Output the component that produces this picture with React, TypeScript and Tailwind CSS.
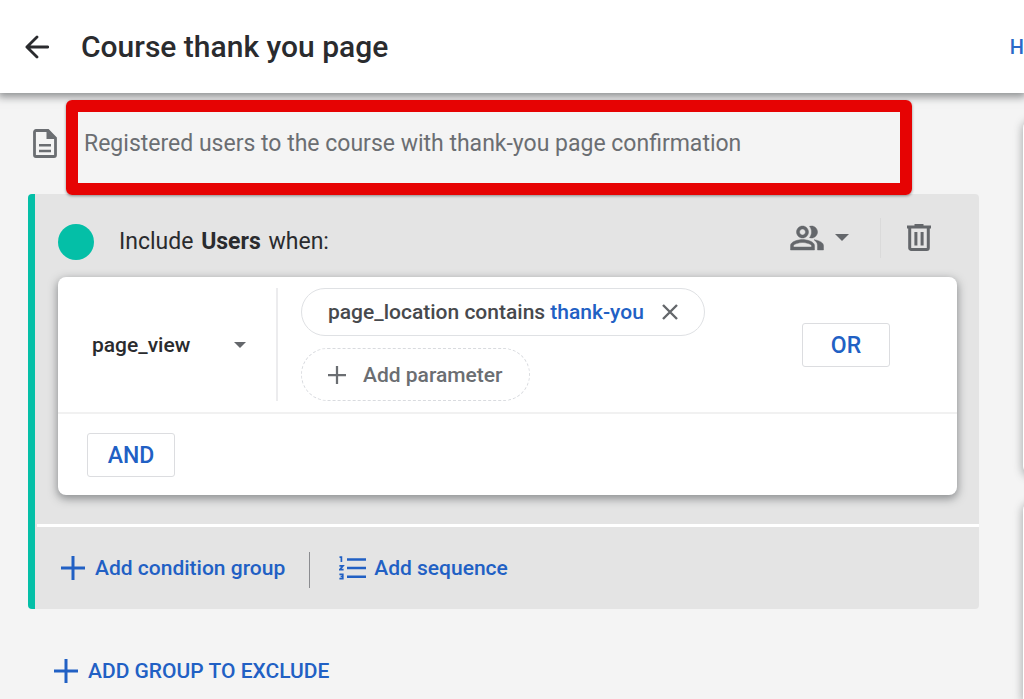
import React from "react";

function PlusIcon({ className }: { className?: string }) {
  return (
    <svg viewBox="0 0 24 24" className={className} fill="none" stroke="currentColor" strokeWidth="3" aria-hidden="true">
      <path d="M12 0v24M0 12h24" />
    </svg>
  );
}

function BackIcon() {
  return (
    <svg viewBox="0 0 24 24" className="size-6" fill="none" stroke="currentColor" strokeWidth="2.8" strokeLinecap="round" strokeLinejoin="round" aria-hidden="true">
      <path d="M22.7 12H2M12 1.9L1.9 12L12 22.1" />
    </svg>
  );
}

function DocIcon() {
  return (
    <svg viewBox="0 0 24 29" className="mb-2 h-[29px] w-6 shrink-0" aria-hidden="true">
      <path d="M3 1.5h12L22.5 9v17a1.5 1.5 0 0 1-1.5 1.5H3A1.5 1.5 0 0 1 1.5 26V3A1.5 1.5 0 0 1 3 1.5z" fill="none" stroke="currentColor" strokeWidth="2.8" />
      <path d="M13.5 1.5V10h9z" fill="currentColor" />
      <path d="M6 16.2h12M6 22h12" stroke="currentColor" strokeWidth="2.6" />
    </svg>
  );
}

function PeopleIcon() {
  return (
    <svg viewBox="0 0 24 24" className="size-9" fill="currentColor" stroke="currentColor" strokeWidth="0.3" aria-hidden="true">
      <path d="M16.67 13.13C18.04 14.06 19 15.32 19 17v3h4v-3c0-2.18-3.57-3.47-6.33-3.87zM15 12c2.21 0 4-1.79 4-4s-1.79-4-4-4c-.47 0-.91.1-1.33.24C14.5 5.27 15 6.58 15 8s-.5 2.73-1.33 3.76c.42.14.86.24 1.33.24zM9 12c2.21 0 4-1.79 4-4s-1.79-4-4-4-4 1.79-4 4 1.79 4 4 4zm0-6c1.1 0 2 .9 2 2s-.9 2-2 2-2-.9-2-2 .9-2 2-2zm0 7c-2.67 0-8 1.34-8 4v3h16v-3c0-2.66-5.33-4-8-4zm6 5H3v-.99C3.2 16.29 6.3 15 9 15s5.8 1.29 6 2v1z" />
    </svg>
  );
}

function TrashIcon() {
  return (
    <svg viewBox="0 0 24 27" className="h-[27px] w-6" fill="none" stroke="currentColor" aria-hidden="true">
      <path d="M0 3h24M7.5 1.2h9" strokeWidth="2.8" />
      <path d="M2.7 3v21a1.5 1.5 0 0 0 1.5 1.5h15.6a1.5 1.5 0 0 0 1.5-1.5V3" strokeWidth="3" />
      <path d="M8.9 8v13.5M15.1 8v13.5" strokeWidth="3" />
    </svg>
  );
}

function SequenceIcon() {
  return (
    <svg viewBox="0 0 27 24" className="h-6 w-[27px]" fill="none" stroke="currentColor" aria-hidden="true">
      <path d="M8 3.5h19M8 12h19M8 20.7h19" strokeWidth="2.6" />
      <path d="M.5 1.2H2.4V6M.4 9.9H4L.8 13.7H4.6M.4 18.4H3.8V22.6H.4M1.6 20.5H3.8" strokeWidth="1.7" />
    </svg>
  );
}

function Caret({ className }: { className?: string }) {
  return (
    <svg viewBox="0 0 14 7" className={className} fill="currentColor" aria-hidden="true">
      <path d="M0 0h14L7 7z" />
    </svg>
  );
}

export default function App() {
  return (
    <div className="min-h-screen overflow-hidden bg-[#f4f4f4] font-[Roboto,sans-serif] text-[#2a2b2e]">
      <header className="relative flex h-[93px] items-center bg-white pl-[25px] shadow-[0_2px_8px_2px_rgba(60,64,67,0.55)]">
        <button aria-label="Back">
          <BackIcon />
        </button>
        <h1 className="ml-8 text-[30px] leading-9 font-medium">Course thank you page</h1>
        <a href="#" className="ml-auto text-[20px] leading-6 font-medium text-[#2a69c8]">
          H
        </a>
      </header>

      <div className="flex">
        <main className="min-w-0 flex-1 pt-[7px] pb-2 pl-7">
          {/* description */}
          <div className="relative flex items-center pr-[67px] pl-[5px] text-[#6b6e72]">
            <DocIcon />
            <div className="ml-[9px] h-[95px] flex-1 rounded-md border-[12px] border-[#e60303] pt-[18px] pl-[6px] shadow-[0_1px_3px_rgba(0,0,0,0.4)]">
              <p className="text-[23px] leading-7">Registered users to the course with thank-you page confirmation</p>
            </div>
          </div>

          {/* include group */}
          <section className="-mt-px rounded-[4px] border-l-[7px] border-[#04bfa7] bg-[#e4e4e4]">
            <div className="flex h-[83px] items-center pt-3 pr-12 pl-[23px]">
              <span className="size-9 rounded-full bg-[#04bfa7]" />
              <h2 className="ml-[25px] text-[23px] leading-7 font-normal">
                Include <b className="mx-0.5 font-bold">Users</b> when:
              </h2>
              <button aria-label="Condition scope" className="mb-2 ml-auto flex items-center text-[#64676b]">
                <PeopleIcon />
                <Caret className="ml-2.5 h-[7px] w-3.5" />
              </button>
              <div className="mr-[26px] mb-2 ml-[31px] h-10 w-px bg-[#dadada]" />
              <button aria-label="Delete group" className="mb-2 text-[#64676b]">
                <TrashIcon />
              </button>
            </div>

            <div className="mr-[22px] ml-[23px] rounded-lg bg-white shadow-[0_3px_8px_1px_rgba(60,64,67,0.5)]">
              <div className="flex items-center border-b-2 border-[#f1f1f1] py-[11px]">
                <label className="relative flex w-[220px] items-center self-stretch border-r-2 border-[#ececee] pl-[34px]">
                  <select aria-label="Event" className="w-full appearance-none bg-transparent text-[21px] leading-6 font-medium">
                    <option>page_view</option>
                  </select>
                  <Caret className="pointer-events-none absolute right-[30px] h-1.5 w-3 text-[#64676b]" />
                </label>
                <div className="flex flex-1 flex-col items-start gap-3 pl-[23px]">
                  <div className="flex h-12 items-center rounded-full border border-[#dfe1e4] px-[26px] text-[21px] leading-6 font-medium text-[#47494d]">
                    <span>
                      page_location contains <span className="text-[#2160c4]">thank-you</span>
                    </span>
                    <button aria-label="Remove parameter" className="ml-[18px] text-[#64676b]">
                      <svg viewBox="0 0 16 16" className="size-4" fill="none" stroke="currentColor" strokeWidth="2.4" aria-hidden="true">
                        <path d="M1 1l14 14M15 1L1 15" />
                      </svg>
                    </button>
                  </div>
                  <button className="flex h-[53px] items-center rounded-full border border-dashed border-[#d9dbdf] px-[26px] text-[21px] leading-6 font-medium text-[#6b6e72]">
                    <PlusIcon className="mr-[17px] size-[18px]" />
                    Add parameter
                  </button>
                </div>
                <button className="mr-[67px] h-11 w-[88px] rounded-[3px] border border-[#dcdde0] pt-0.5 text-[23px] leading-7 font-medium text-[#2160c4]">OR</button>
              </div>
              <div className="px-[29px] pt-[19px] pb-[18px]">
                <button className="block h-11 w-[88px] rounded-[3px] border border-[#dcdde0] pt-0.5 text-[23px] leading-7 font-medium text-[#2160c4]">AND</button>
              </div>
            </div>

            <div className="mt-[29px] ml-0.5 h-[3px] bg-white" />

            <div className="flex h-[82px] items-center pl-[26px] text-[21px] leading-6 font-medium text-[#2160c4]">
              <button className="flex items-center gap-2.5">
                <PlusIcon className="size-6" />
                Add condition group
              </button>
              <div className="mr-[29px] ml-6 mt-1 h-9 w-px bg-[#8b8c90]" />
              <button className="flex items-center gap-2">
                <SequenceIcon />
                Add sequence
              </button>
            </div>
          </section>

          <button className="mt-[50px] ml-[26px] flex items-center gap-2.5 text-[21px] leading-6 font-medium text-[#2160c4]">
            <PlusIcon className="size-6" />
            ADD GROUP TO EXCLUDE
          </button>
        </main>

        {/* summary cards, running past the right edge */}
        <aside className="ml-11 flex h-[606px] w-px shrink-0 flex-col gap-7 pt-[27px]">
          <div className="h-[354px] w-80 rounded-lg bg-white shadow-[0_2px_8px_1px_rgba(60,64,67,0.4)]" />
          <div className="min-h-0 w-80 flex-1 rounded-t-lg bg-white shadow-[0_2px_8px_1px_rgba(60,64,67,0.4)]" />
        </aside>
      </div>
    </div>
  );
}
